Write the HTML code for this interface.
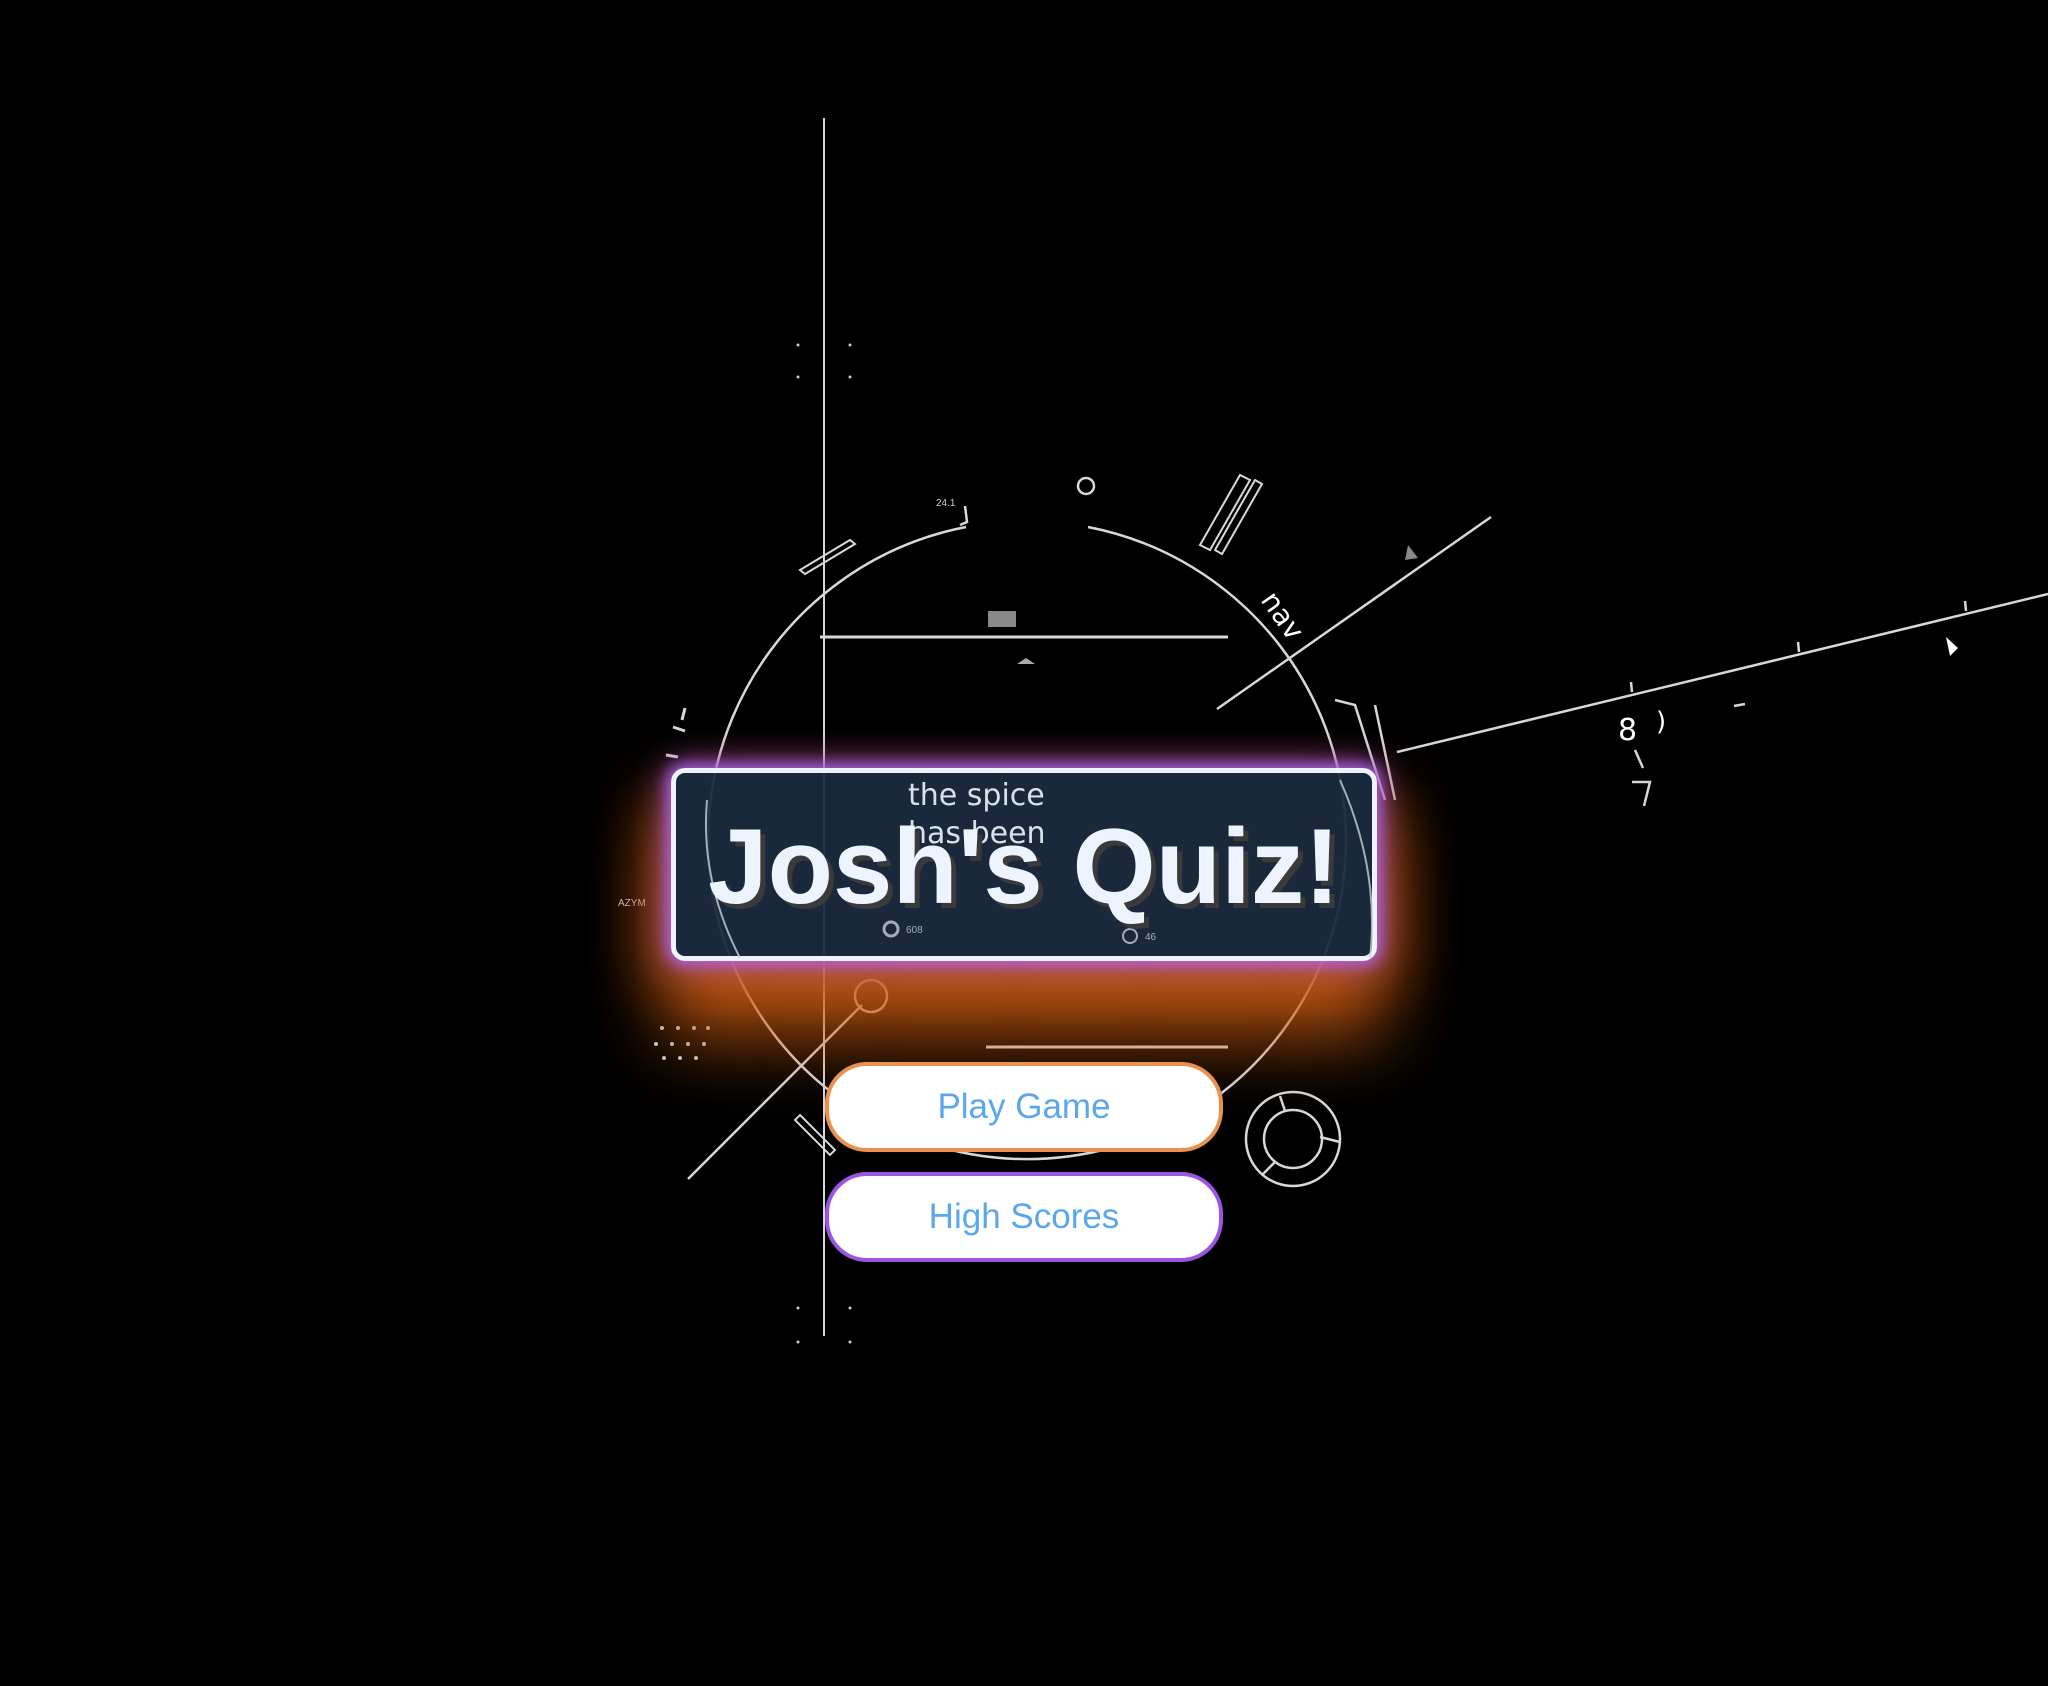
<!DOCTYPE html>
<html><head><meta charset="utf-8"><style>
html,body{margin:0;padding:0;background:#000;width:2048px;height:1686px;overflow:hidden;font-family:"Liberation Sans",Arial,sans-serif}
svg.bg{position:absolute;left:0;top:0}
.box{position:absolute;left:671px;top:768px;width:696px;height:183px;border:5px solid #eef4ff;border-radius:14px;background:rgba(26,42,62,0.95);
box-shadow:0 0 14px 4px rgba(180,100,240,0.9),0 0 30px 10px rgba(160,80,200,0.5),0 70px 70px 10px rgba(210,95,20,0.75),-25px 20px 55px 5px rgba(210,95,20,0.45),25px 20px 55px 5px rgba(210,95,20,0.45)}
.spice{position:absolute;left:908px;top:777px;color:#d8e0e8;font-family:"DejaVu Sans",sans-serif;font-size:30px;line-height:38px;letter-spacing:0px}
.title{position:absolute;left:671px;top:801px;width:706px;text-align:center;font-weight:bold;font-size:107px;color:#eef4ff;text-shadow:5px 5px 0 #3a3a3a;line-height:130px}
.btn{position:absolute;left:825px;width:390px;height:82px;background:#fff;border-radius:42px;text-align:center;line-height:82px;font-size:35px;color:#5aa7ec}
.b1{top:1062px;border:4px solid #ea9150}
.b2{top:1172px;border:4px solid #9b55e6}
</style></head><body>
<svg class="bg" width="2048" height="1686" viewBox="0 0 2048 1686" fill="none" stroke="#d8d8d8" stroke-width="2.5">
<line x1="824" y1="118" x2="824" y2="1336" stroke-width="2"/>
<path d="M1088 527 A319 319 0 1 1 966 527"/>
<path d="M800 570 L850 540 L855 544 L805 574 Z" stroke-width="2"/>
<path d="M1200 545 L1240 475 L1250 480 L1210 550 Z M1215 550 L1255 480 L1262 484 L1222 554 Z" stroke-width="2"/>
<path d="M965 506 L967 522 L960 525"/>
<circle cx="1086" cy="486" r="8"/>
<line x1="820" y1="637" x2="1228" y2="637" stroke-width="3"/>
<path d="M1026 658 L1035 664 L1017 664 Z" fill="#aaa" stroke="none"/>
<rect x="988" y="611" width="28" height="16" fill="#888" stroke="none"/>
<line x1="1217" y1="709" x2="1491" y2="517"/>
<path d="M1408 545 L1418 558 L1405 560 Z" fill="#888" stroke="none"/>
<line x1="1397" y1="752" x2="2048" y2="594"/>
<line x1="1631" y1="682" x2="1632" y2="692"/><line x1="1798" y1="642" x2="1799" y2="652"/><line x1="1965" y1="601" x2="1966" y2="611"/>
<path d="M1946 637 L1958 648 L1950 656 Z" fill="#fff" stroke="none"/>
<line x1="1734" y1="706" x2="1745" y2="704"/>
<text x="1618" y="740" fill="#fff" stroke="none" font-family="DejaVu Sans" font-size="30">8</text>
<text x="1656" y="730" fill="#fff" stroke="none" font-family="DejaVu Sans" font-size="26">)</text>
<line x1="1635" y1="750" x2="1643" y2="768"/>
<path d="M1632 782 L1650 782 L1644 806"/>
<text x="1260" y="600" fill="#fff" stroke="none" font-family="DejaVu Sans" font-size="28" transform="rotate(55 1260 600)">nav</text>
<path d="M1335 700 L1355 705 L1385 800 M1375 705 L1395 800"/>
<line x1="688" y1="1179" x2="862" y2="1005"/>
<circle cx="871" cy="996" r="16"/>
<circle cx="1293" cy="1139" r="47"/><circle cx="1293" cy="1139" r="29"/>
<line x1="1280" y1="1096" x2="1285" y2="1111"/><line x1="1320" y1="1137" x2="1340" y2="1142"/><line x1="1275" y1="1162" x2="1262" y2="1175"/>
<line x1="986" y1="1047" x2="1228" y2="1047" stroke-width="3"/>
<path d="M800 1115 L835 1150 L830 1155 L795 1120 Z" stroke-width="2"/>
<path d="M685 708 L682 720 M673 727 L685 731 M666 755 L678 757" stroke-width="3"/>
<g fill="#ccc" stroke="none">
<circle cx="662" cy="1028" r="2"/><circle cx="678" cy="1028" r="2"/><circle cx="694" cy="1028" r="2"/><circle cx="708" cy="1028" r="2"/>
<circle cx="656" cy="1044" r="2"/><circle cx="672" cy="1044" r="2"/><circle cx="688" cy="1044" r="2"/><circle cx="704" cy="1044" r="2"/>
<circle cx="664" cy="1058" r="2"/><circle cx="680" cy="1058" r="2"/><circle cx="696" cy="1058" r="2"/>
<circle cx="798" cy="345" r="1.5"/><circle cx="850" cy="345" r="1.5"/><circle cx="798" cy="377" r="1.5"/><circle cx="850" cy="377" r="1.5"/>
<circle cx="798" cy="1308" r="1.5"/><circle cx="850" cy="1308" r="1.5"/><circle cx="798" cy="1342" r="1.5"/><circle cx="850" cy="1342" r="1.5"/>
</g>
<text x="618" y="906" fill="#ccc" stroke="none" font-size="10" font-family="Liberation Sans">AZYM</text>
<text x="936" y="506" fill="#ccc" stroke="none" font-size="10" font-family="Liberation Sans">24.1</text>
</svg>
<div class="box"></div>
<svg class="bg" width="2048" height="1686" fill="none" stroke="#c8d0d8" stroke-width="2" style="opacity:.8">
<path d="M707 800 Q700 880 740 958"/>
<path d="M1340 780 Q1380 870 1370 958"/>
<circle cx="891" cy="929" r="7" stroke-width="3"/><circle cx="1130" cy="936" r="7"/>
<text x="906" y="933" fill="#ccc" stroke="none" font-size="10">608</text>
<text x="1145" y="940" fill="#ccc" stroke="none" font-size="10">46</text>
</svg>
<div class="spice">the spice<br>has been</div>
<div class="title">Josh's Quiz!</div>
<div class="btn b1">Play Game</div>
<div class="btn b2">High Scores</div>
</body></html>
